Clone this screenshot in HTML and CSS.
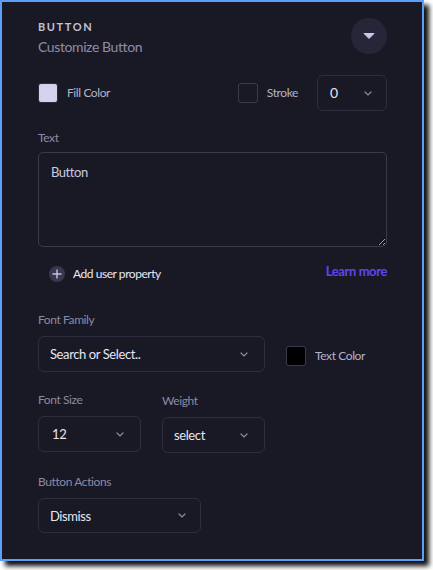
FILE: index.html
```html
<!DOCTYPE html>
<html lang="en">
<head>
<meta charset="utf-8">
<title>Button settings</title>
<link rel="stylesheet" href="styles.css">
</head>
<body>
<div class="panel">
  <div class="header">
    <div class="titles">
      <div class="title">BUTTON</div>
      <div class="subtitle">Customize Button</div>
    </div>
    <button class="collapse" aria-label="Collapse">
      <svg width="12" height="8" viewBox="0 0 12 8"><path d="M1 1.5 H11 L6 6.5 Z" fill="#c9c8ea" stroke="#c9c8ea" stroke-width="1" stroke-linejoin="round"/></svg>
    </button>
  </div>

  <div class="row-fill">
    <div class="check-item">
      <span class="swatch swatch-fill"></span>
      <span class="check-label">Fill Color</span>
    </div>
    <div class="stroke-group">
      <div class="check-item">
        <span class="swatch swatch-empty"></span>
        <span class="check-label">Stroke</span>
      </div>
      <div class="select sel-stroke"><span class="sel-value">0</span><svg class="chev" width="8" height="5" viewBox="0 0 8 5"><path d="M1 1 L4 4 L7 1" fill="none" stroke="#8c8ba8" stroke-width="1.2" stroke-linecap="round"/></svg></div>
    </div>
  </div>

  <div class="label label-text">Text</div>
  <textarea class="textarea">Button</textarea>

  <div class="row-add">
    <div class="add-prop">
      <span class="plus">
        <svg width="10" height="10" viewBox="0 0 10 10"><path d="M5 0.5 V9.5 M0.5 5 H9.5" stroke="#c4c3e2" stroke-width="1.4"/></svg>
      </span>
      <span class="add-label">Add user property</span>
    </div>
    <a class="learn" href="#">Learn more</a>
  </div>

  <div class="label label-family">Font Family</div>
  <div class="row-family">
    <div class="select sel-family"><span class="sel-value">Search or Select..</span><svg class="chev" width="8" height="5" viewBox="0 0 8 5"><path d="M1 1 L4 4 L7 1" fill="none" stroke="#8c8ba8" stroke-width="1.2" stroke-linecap="round"/></svg></div>
    <div class="check-item text-color">
      <span class="swatch swatch-black"></span>
      <span class="check-label">Text Color</span>
    </div>
  </div>

  <div class="row-size">
    <div class="field">
      <div class="label">Font Size</div>
      <div class="select sel-small"><span class="sel-value pad-num">12</span><svg class="chev" width="8" height="5" viewBox="0 0 8 5"><path d="M1 1 L4 4 L7 1" fill="none" stroke="#8c8ba8" stroke-width="1.2" stroke-linecap="round"/></svg></div>
    </div>
    <div class="field field-weight">
      <div class="label">Weight</div>
      <div class="select sel-small"><span class="sel-value">select</span><svg class="chev" width="8" height="5" viewBox="0 0 8 5"><path d="M1 1 L4 4 L7 1" fill="none" stroke="#8c8ba8" stroke-width="1.2" stroke-linecap="round"/></svg></div>
    </div>
  </div>

  <div class="label label-actions">Button Actions</div>
  <div class="select sel-actions"><span class="sel-value">Dismiss</span><svg class="chev" width="8" height="5" viewBox="0 0 8 5"><path d="M1 1 L4 4 L7 1" fill="none" stroke="#8c8ba8" stroke-width="1.2" stroke-linecap="round"/></svg></div>
</div>
</body>
</html>
```

FILE: styles.css
```css
html, body {
  margin: 0;
  padding: 0;
  background: #ffffff;
}

body {
  font-family: Lato, "Open Sans", "Liberation Sans", sans-serif;
  width: 433px;
  height: 570px;
  overflow: hidden;
}

.panel {
  box-sizing: border-box;
  width: 424px;
  height: 561px;
  border: 2px solid #5d9ef8;
  background: #191926;
  box-shadow: 5px 5px 5px rgba(0, 0, 0, 0.95);
  padding: 16px 35px 0 36px;
  display: flex;
  flex-direction: column;
}

.header {
  display: flex;
  justify-content: space-between;
  align-items: flex-start;
  height: 39px;
}

.titles {
  margin-top: 1px;
}

.title {
  font-size: 11px;
  line-height: 16px;
  font-weight: 700;
  letter-spacing: 1.6px;
  color: #c2c1d3;
}

.subtitle {
  margin-top: 2px;
  font-size: 14px;
  line-height: 20px;
  letter-spacing: -0.4px;
  color: #8e8dab;
}

.collapse {
  width: 36px;
  height: 36px;
  border-radius: 50%;
  border: none;
  background: #262638;
  padding: 0;
  display: flex;
  align-items: center;
  justify-content: center;
}

.row-fill {
  margin-top: 18px;
  display: flex;
  justify-content: space-between;
  align-items: center;
  height: 36px;
}

.check-item {
  display: flex;
  align-items: center;
}

.swatch {
  box-sizing: border-box;
  width: 20px;
  height: 20px;
  border-radius: 3px;
  border: 1.5px solid #343447;
}

.swatch-fill {
  background: #d2d2ec;
  border-color: #2b2b3d;
}

.swatch-empty {
  background: #191926;
  border-color: #3a3a4d;
}

.swatch-black {
  background: #000000;
  border-color: #3a3a4d;
}

.check-label {
  margin-left: 9px;
  font-size: 12px;
  line-height: 18px;
  letter-spacing: -0.4px;
  color: #b3b2c8;
}

.stroke-group {
  display: flex;
  align-items: center;
}

.select {
  box-sizing: border-box;
  display: flex;
  align-items: center;
  justify-content: space-between;
  border: 1px solid #2d2d3f;
  border-radius: 6px;
  padding: 0 14px 0 11px;
  background: #191926;
}

.sel-value {
  font-size: 13px;
  line-height: 18px;
  letter-spacing: -0.4px;
  color: #e6e6f2;
}

.pad-num {
  padding-left: 2px;
}

.chev {
  display: block;
}

.sel-stroke {
  margin-left: 19px;
  width: 70px;
  height: 36px;
  padding-left: 12px;
}

.sel-stroke .sel-value {
  font-size: 14px;
  letter-spacing: 0;
}

.label {
  font-size: 12px;
  line-height: 18px;
  letter-spacing: -0.4px;
  color: #8b8aa3;
}

.label-text {
  margin-top: 18px;
}

.textarea {
  box-sizing: border-box;
  margin-top: 5px;
  width: 349px;
  height: 95px;
  border: 1px solid #3a3a4c;
  border-radius: 5px;
  background: #191926;
  color: #c9c8e2;
  font-family: Lato, "Open Sans", "Liberation Sans", sans-serif;
  font-size: 13px;
  line-height: 18px;
  letter-spacing: -0.45px;
  padding: 10px 12px;
  color-scheme: dark;
  resize: vertical;
  outline: none;
}

.row-add {
  margin-top: 16px;
  height: 20px;
  display: flex;
  justify-content: space-between;
  align-items: center;
}

.add-prop {
  display: flex;
  align-items: center;
  padding-left: 11px;
  margin-top: 2px;
}

.plus {
  width: 16px;
  height: 16px;
  border-radius: 50%;
  background: #37374f;
  display: flex;
  align-items: center;
  justify-content: center;
}

.add-label {
  margin-left: 8px;
  font-size: 12px;
  line-height: 18px;
  letter-spacing: -0.45px;
  color: #e8e8f5;
}

.learn {
  font-size: 13px;
  line-height: 18px;
  font-weight: 700;
  letter-spacing: -0.4px;
  color: #5f45f0;
  text-decoration: none;
  margin-top: -4px;
}

.label-family {
  margin-top: 28px;
}

.row-family {
  margin-top: 7px;
  display: flex;
  align-items: center;
}

.sel-family {
  width: 227px;
  height: 36px;
  padding-right: 16px;
}

.text-color {
  margin-left: 21px;
  margin-top: 4px;
}

.row-size {
  margin-top: 19px;
  display: flex;
  gap: 21px;
}

.field {
  display: flex;
  flex-direction: column;
  gap: 7px;
}

.field-weight {
  margin-top: 1px;
}

.sel-small {
  width: 103px;
  height: 36px;
  padding-right: 16px;
}

.label-actions {
  margin-top: 20px;
}

.sel-actions {
  margin-top: 7px;
  width: 163px;
  height: 35px;
  padding-right: 14px;
}
```
